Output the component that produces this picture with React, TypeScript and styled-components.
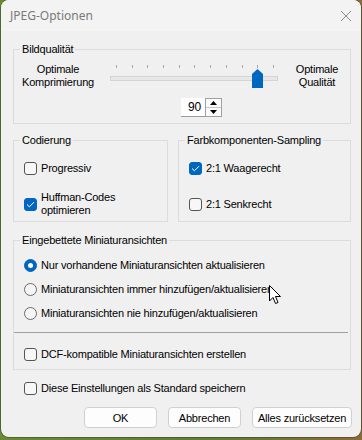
import React from "react";
import styled, { createGlobalStyle } from "styled-components";

const GlobalStyle = createGlobalStyle`
  html, body {
    margin: 0;
    padding: 0;
    width: 362px;
    height: 440px;
    overflow: hidden;
    background: linear-gradient(90deg, #6a8a3a 0%, #5f7d33 60%, #8a6a3a 100%);
  }
  * {
    box-sizing: border-box;
  }
`;

const Window = styled.div`
  margin-left: 1px;
  width: 360px;
  height: 437px;
  border-radius: 8px;
  overflow: hidden;
  background: #f0f0f0;
  box-shadow: 0 0 0 1px rgba(0, 0, 0, 0.25);
  display: flex;
  flex-direction: column;
  position: relative;
  font-family: "Liberation Sans", Arial, sans-serif;
  font-size: 11px;
  letter-spacing: -0.2px;
  color: #000;
`;

const TitleBar = styled.div`
  height: 31px;
  flex-shrink: 0;
  background: #f3f3f3;
  display: flex;
  align-items: center;
  justify-content: space-between;
  padding: 0 9px 0 9px;
`;

const Title = styled.span`
  font-family: "Noto Sans", "Open Sans", sans-serif;
  font-size: 12px;
  letter-spacing: 0;
  color: #7a7a7a;
  margin-top: -1px;
`;

const Body = styled.div`
  flex: 1;
  display: flex;
  flex-direction: column;
  padding: 11px 10px 0 12px;
`;

const Group = styled.fieldset<{ $top?: number }>`
  margin: ${(p) => p.$top ?? 0}px 0 0 0;
  padding: 0;
  border: 1px solid #dcdcdc;
  min-width: 0;
`;

const Legend = styled.legend`
  padding: 0 2px;
  margin-left: 6px;
  line-height: 14px;
`;

const QualityRow = styled.div`
  display: grid;
  grid-template-columns: 88px 168px 62px;
  column-gap: 8px;
  margin-top: 7px;
  align-items: center;
`;

const EndLabel = styled.div`
  text-align: center;
  line-height: 13px;
`;

const Slider = styled.div`
  position: relative;
  height: 26px;
  display: flex;
  flex-direction: column;
`;

const Ticks = styled.div`
  display: flex;
  justify-content: space-between;
  padding: 0 4px 0 6px;
  margin-top: 2px;
  height: 3px;
`;

const Tick = styled.span`
  width: 1px;
  height: 3px;
  background: #a8a8a8;
`;

const Track = styled.div`
  margin-top: 8px;
  height: 5px;
  background: #e7e7e7;
  border: 1px solid #d4d4d4;
`;

const Thumb = styled.svg`
  position: absolute;
  left: 142px;
  top: 6px;
`;

const SpinRow = styled.div`
  display: flex;
  padding-left: 167px;
  margin: 9px 0 6px;
`;

const SpinInput = styled.div`
  width: 24px;
  height: 19px;
  background: #fff;
  border-bottom: 1px solid #9a9a9a;
  display: flex;
  align-items: center;
  justify-content: flex-end;
  padding-right: 4px;
  font-size: 12px;
`;

const SpinButtons = styled.div`
  width: 17px;
  height: 19px;
  border: 1px solid #a0a0a0;
  display: flex;
  flex-direction: column;
  background: #f0f0f0;
`;

const SpinButton = styled.div<{ $down?: boolean }>`
  flex: 1;
  display: flex;
  align-items: center;
  justify-content: center;
  background: #fbfbfb;
  border-top: ${(p) => (p.$down ? "1px solid #c8c8c8" : "none")};
`;

const TwoCols = styled.div`
  display: grid;
  grid-template-columns: 155px 173px;
  column-gap: 10px;
  margin-top: 9px;
`;

const OptionList = styled.div<{ $gap: number; $top: number; $bottom: number }>`
  display: flex;
  flex-direction: column;
  gap: ${(p) => p.$gap}px;
  padding: ${(p) => p.$top}px 0 ${(p) => p.$bottom}px 10px;
`;

const Option = styled.label<{ $h?: number }>`
  display: flex;
  align-items: center;
  gap: 4px;
  min-height: ${(p) => p.$h ?? 24}px;
  line-height: 13px;
`;

const Box = styled.span<{ $checked?: boolean }>`
  width: 13px;
  height: 13px;
  flex-shrink: 0;
  border-radius: 3px;
  border: 1px solid ${(p) => (p.$checked ? "#0067c0" : "#555")};
  background: ${(p) => (p.$checked ? "#0067c0" : "#f7f7f7")};
  display: flex;
  align-items: center;
  justify-content: center;
`;

const Radio = styled.span<{ $checked?: boolean }>`
  width: 13px;
  height: 13px;
  flex-shrink: 0;
  border-radius: 50%;
  border: 1px solid ${(p) => (p.$checked ? "#0067c0" : "#6a6a6a")};
  background: ${(p) => (p.$checked ? "#0067c0" : "#f5f5f5")};
  display: flex;
  align-items: center;
  justify-content: center;
  &::after {
    content: "";
    display: ${(p) => (p.$checked ? "block" : "none")};
    width: 5px;
    height: 5px;
    border-radius: 50%;
    background: #fff;
  }
`;

const Divider = styled.div`
  height: 1px;
  background: #a0a0a0;
  margin: 7px 2px 0 0;
`;

const Standalone = styled.div`
  padding-left: 11px;
  margin-top: 6px;
`;

const Buttons = styled.div`
  display: flex;
  justify-content: flex-end;
  gap: 11px;
  margin: 7px -1px 0 0;
`;

const Button = styled.button<{ $w: number }>`
  width: ${(p) => p.$w}px;
  height: 21px;
  padding: 0;
  background: #fdfdfd;
  border: 1px solid #d0d0d0;
  border-radius: 4px;
  font-family: inherit;
  font-size: 11px;
  letter-spacing: -0.2px;
  color: #000;
`;

const Cursor = styled.svg`
  position: absolute;
  left: 268px;
  top: 285px;
`;

const Check = () => (
  <svg width="9" height="7" viewBox="0 0 9 7">
    <path d="M1 3.5 L3.4 5.8 L8 1.2" fill="none" stroke="#fff" strokeWidth="1" />
  </svg>
);

const CheckBox = ({ checked, h, children }: { checked?: boolean; h?: number; children: React.ReactNode }) => (
  <Option $h={h}>
    <Box $checked={checked}>{checked && <Check />}</Box>
    <span>{children}</span>
  </Option>
);

const RadioOption = ({ checked, children }: { checked?: boolean; children: React.ReactNode }) => (
  <Option>
    <Radio $checked={checked} />
    <span>{children}</span>
  </Option>
);

export default function App() {
  return (
    <>
      <GlobalStyle />
      <Window>
        <TitleBar>
          <Title>JPEG-Optionen</Title>
          <svg width="12" height="12" viewBox="0 0 12 12">
            <path d="M1 1 L11 11 M11 1 L1 11" stroke="#8a8a8a" strokeWidth="1" />
          </svg>
        </TitleBar>
        <Body>
          <Group>
            <Legend>Bildqualität</Legend>
            <QualityRow>
              <EndLabel>
                Optimale
                <br />
                Komprimierung
              </EndLabel>
              <Slider>
                <Ticks>
                  {Array.from({ length: 11 }).map((_, i) => (
                    <Tick key={i} />
                  ))}
                </Ticks>
                <Track />
                <Thumb width="11" height="19" viewBox="0 0 11 19">
                  <path d="M5.5 0 L11 5 L11 19 L0 19 L0 5 Z" fill="#0067c0" />
                </Thumb>
              </Slider>
              <EndLabel>
                Optimale
                <br />
                Qualität
              </EndLabel>
            </QualityRow>
            <SpinRow>
              <SpinInput>90</SpinInput>
              <SpinButtons>
                <SpinButton>
                  <svg width="7" height="4" viewBox="0 0 7 4">
                    <path d="M0 4 L3.5 0 L7 4 Z" fill="#000" />
                  </svg>
                </SpinButton>
                <SpinButton $down>
                  <svg width="7" height="4" viewBox="0 0 7 4">
                    <path d="M0 0 L7 0 L3.5 4 Z" fill="#000" />
                  </svg>
                </SpinButton>
              </SpinButtons>
            </SpinRow>
          </Group>

          <TwoCols>
            <Group>
              <Legend>Codierung</Legend>
              <OptionList $gap={10} $top={8} $bottom={4}>
                <CheckBox h={26}>Progressiv</CheckBox>
                <CheckBox checked h={26}>
                  Huffman-Codes
                  <br />
                  optimieren
                </CheckBox>
              </OptionList>
            </Group>
            <Group>
              <Legend>Farbkomponenten-Sampling</Legend>
              <OptionList $gap={10} $top={8} $bottom={4}>
                <CheckBox checked h={26}>2:1 Waagerecht</CheckBox>
                <CheckBox h={26}>2:1 Senkrecht</CheckBox>
              </OptionList>
            </Group>
          </TwoCols>

          <Group $top={11}>
            <Legend>Eingebettete Miniaturansichten</Legend>
            <OptionList $gap={0} $top={6} $bottom={0}>
              <RadioOption checked>Nur vorhandene Miniaturansichten aktualisieren</RadioOption>
              <RadioOption>Miniaturansichten immer hinzufügen/aktualisieren</RadioOption>
              <RadioOption>Miniaturansichten nie hinzufügen/aktualisieren</RadioOption>
            </OptionList>
            <Divider />
            <OptionList $gap={0} $top={9} $bottom={3}>
              <CheckBox>DCF-kompatible Miniaturansichten erstellen</CheckBox>
            </OptionList>
          </Group>

          <Standalone>
            <CheckBox>Diese Einstellungen als Standard speichern</CheckBox>
          </Standalone>

          <Buttons>
            <Button $w={73}>OK</Button>
            <Button $w={73}>Abbrechen</Button>
            <Button $w={100}>Alles zurücksetzen</Button>
          </Buttons>
        </Body>
        <Cursor width="13" height="20" viewBox="0 0 13 20">
          <path
            d="M0.5 0.5 L0.5 16 L4 12.5 L6.5 18.5 L9 17.5 L6.5 11.5 L11.5 11.5 Z"
            fill="#fff"
            stroke="#000"
            strokeWidth="1"
            strokeLinejoin="round"
          />
        </Cursor>
      </Window>
    </>
  );
}
